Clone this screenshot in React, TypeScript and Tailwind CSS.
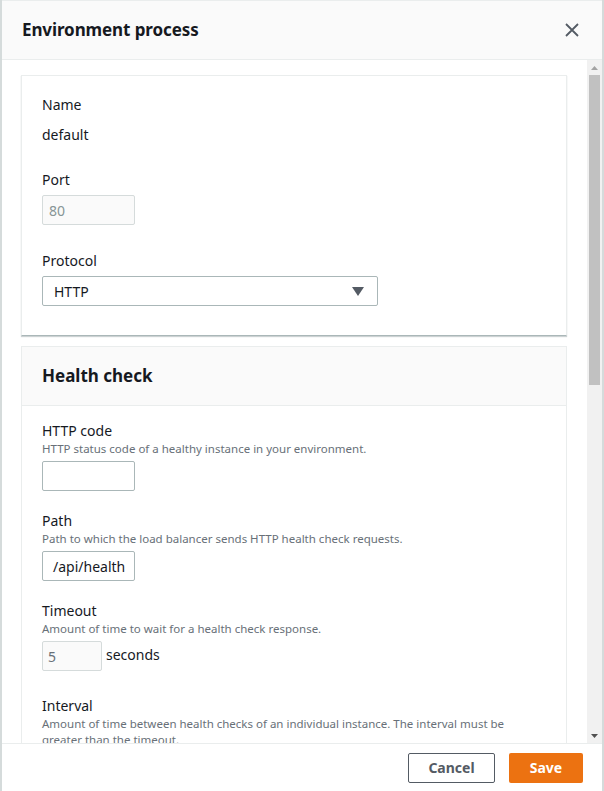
import React from "react";

const font = { fontFamily: '"Noto Sans", "Open Sans", Arial, sans-serif' };

function Label({ children }: { children: React.ReactNode }) {
  return <div className="text-[14px] leading-[20px] text-[#16191f]">{children}</div>;
}
function Desc({ children, cls = "" }: { children: React.ReactNode; cls?: string }) {
  return <div className={"text-[11.5px] leading-[16px] text-[#687078] " + cls}>{children}</div>;
}

export default function App() {
  return (
    <div style={font} className="w-[604px] h-[791px] flex flex-col bg-white border-l-2 border-r-2 border-[#d5dbdb] overflow-hidden">
      {/* Header */}
      <div className="h-[60px] shrink-0 bg-[#fafafa] border-b border-[#eaeded] border-t flex items-center justify-between pl-[20px] pr-[22px]">
        <div className="text-[17px] font-bold text-[#16191f] tracking-[-0.1px]">Environment process</div>
        <svg width="16" height="16" viewBox="0 0 16 16" className="text-[#545b64]">
          <path d="M2 2 L14 14 M14 2 L2 14" stroke="currentColor" strokeWidth="1.8" fill="none" />
        </svg>
      </div>

      {/* Body */}
      <div className="flex flex-1 min-h-0">
        <div className="flex-1 min-w-0 overflow-hidden pt-[15px] pl-[19px] pr-[20px] flex flex-col gap-[10px]">
          {/* Card 1 */}
          <div className="border border-[#eaeded] border-b-[#aab7b8] bg-white shadow-[0_1px_1px_rgba(0,28,36,0.2)] pt-[19px] pb-[29px] px-[20px]">
            <Label>Name</Label>
            <div className="mt-[10px] text-[14px] leading-[20px] text-[#16191f]">default</div>
            <div className="mt-[25px]"><Label>Port</Label></div>
            <div className="mt-[5px] w-[93px] h-[30px] rounded-[2px] border border-[#d5dbdb] bg-[#fafafa] flex items-center px-[6px] text-[14px] text-[#879596]">80</div>
            <div className="mt-[26px]"><Label>Protocol</Label></div>
            <div className="mt-[5px] w-[336px] h-[30px] rounded-[2px] border border-[#aab7b8] bg-white flex items-center justify-between pl-[11px] pr-[13px] text-[14px] text-[#16191f]">
              <span>HTTP</span>
              <svg width="12" height="9" viewBox="0 0 12 9"><path d="M0 0 H12 L6 9 Z" fill="#545b64" /></svg>
            </div>
          </div>

          {/* Card 2 */}
          <div className="border border-[#eaeded] bg-white flex-1">
            <div className="h-[59px] bg-[#fafafa] border-b border-[#eaeded] flex items-center px-[20px]">
              <div className="text-[17px] font-bold text-[#16191f]">Health check</div>
            </div>
            <div className="px-[20px] pt-[15px]">
              <Label>HTTP code</Label>
              <Desc>HTTP status code of a healthy instance in your environment.</Desc>
              <div className="mt-[4px] w-[93px] h-[30px] rounded-[2px] border border-[#aab7b8] bg-white" />

              <div className="mt-[20px]"><Label>Path</Label></div>
              <Desc>Path to which the load balancer sends HTTP health check requests.</Desc>
              <div className="mt-[4px] w-[93px] h-[30px] rounded-[2px] border border-[#aab7b8] bg-white flex items-center pl-[10px] text-[14px] text-[#16191f] overflow-hidden whitespace-nowrap">/api/health</div>

              <div className="mt-[20px]"><Label>Timeout</Label></div>
              <Desc>Amount of time to wait for a health check response.</Desc>
              <div className="mt-[4px] flex items-start gap-[4px]">
                <div className="w-[60px] h-[30px] rounded-[2px] border border-[#d5dbdb] bg-[#fafafa] flex items-center px-[5px] text-[14px] text-[#687078]">5</div>
                <div className="text-[14px] leading-[20px] pt-[4px] text-[#16191f]">seconds</div>
              </div>

              <div className="mt-[25px]"><Label>Interval</Label></div>
              <Desc cls="whitespace-nowrap">
                Amount of time between health checks of an individual instance. The interval must be
                <br />
                greater than the timeout.
              </Desc>
            </div>
          </div>
        </div>

        {/* Scrollbar */}
        <div className="w-[15px] shrink-0 bg-[#f1f1f1] flex flex-col items-center">
          <div className="h-[15px] w-full flex items-center justify-center">
            <svg width="7" height="4" viewBox="0 0 7 4"><path d="M0 4 L3.5 0 L7 4 Z" fill="#a3a3a3" /></svg>
          </div>
          <div className="w-[11px] h-[310px] bg-[#c1c1c1]" />
          <div className="flex-1" />
          <div className="h-[15px] w-full flex items-center justify-center">
            <svg width="7" height="4" viewBox="0 0 7 4"><path d="M0 0 L7 0 L3.5 4 Z" fill="#505050" /></svg>
          </div>
        </div>
      </div>

      {/* Footer */}
      <div className="h-[48px] shrink-0 border-t border-[#eaeded] bg-white flex items-center justify-end gap-[14px] pr-[19px]">
        <div className="w-[87px] h-[30px] rounded-[2px] border border-[#545b64] flex items-center justify-center text-[14px] font-bold text-[#545b64]">Cancel</div>
        <div className="w-[74px] h-[30px] rounded-[2px] bg-[#ec7211] flex items-center justify-center text-[14px] font-bold text-white">Save</div>
      </div>
    </div>
  );
}
